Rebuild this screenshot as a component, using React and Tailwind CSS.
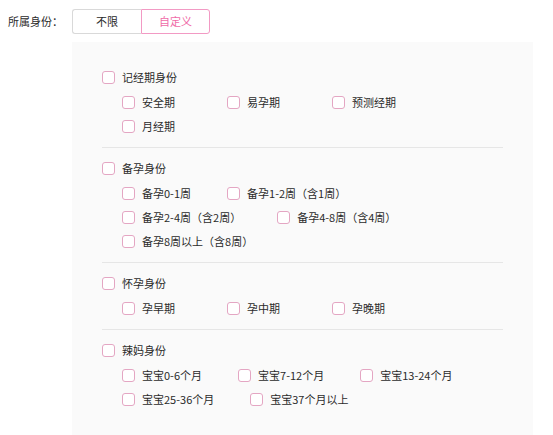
// App.jsx — 所属身份 selector with custom identity groups
import { useState } from 'react'

const groups = [
  {
    title: '记经期身份',
    rows: [['安全期', '易孕期', '预测经期'], ['月经期']],
  },
  {
    title: '备孕身份',
    rows: [['备孕0-1周', '备孕1-2周（含1周）'], ['备孕2-4周（含2周）', '备孕4-8周（含4周）'], ['备孕8周以上（含8周）']],
  },
  {
    title: '怀孕身份',
    rows: [['孕早期', '孕中期', '孕晚期']],
  },
  {
    title: '辣妈身份',
    rows: [['宝宝0-6个月', '宝宝7-12个月', '宝宝13-24个月'], ['宝宝25-36个月', '宝宝37个月以上']],
  },
]

function Check({ label, checked, onChange }) {
  return (
    <label className="flex items-center h-[24px] cursor-pointer">
      <span
        onClick={onChange}
        className={`w-[13px] h-[13px] rounded-[3px] border flex-shrink-0 ${
          checked ? 'bg-[#f06ba8] border-[#f06ba8]' : 'bg-white border-[#e4a6c3]'
        }`}
      />
      <span className="ml-[7px] whitespace-nowrap">{label}</span>
    </label>
  )
}

export default function App() {
  const [mode, setMode] = useState('custom')
  const [picked, setPicked] = useState({})
  const toggle = (k) => setPicked((p) => ({ ...p, [k]: !p[k] }))

  return (
    <div
      className="w-[553px] h-[435px] bg-white text-[11px] text-[#2b2b2b] overflow-hidden"
      style={{ fontFamily: '"Noto Sans CJK SC", "Noto Sans", sans-serif' }}
    >
      {/* Top row */}
      <div className="flex items-center pt-[9px] pl-[8px]">
        <div className="w-[64px]">所属身份：</div>
        <div className="flex h-[25px]">
          <button
            onClick={() => setMode('all')}
            className={`w-[69px] h-full rounded-l-[3px] border ${
              mode === 'all' ? 'border-[#f29ac4] text-[#f06ba8]' : 'border-[#d9d9d9] border-r-0 text-[#2b2b2b]'
            }`}
          >
            不限
          </button>
          <button
            onClick={() => setMode('custom')}
            className={`w-[69px] h-full rounded-r-[3px] border ${
              mode === 'custom' ? 'border-[#f29ac4] text-[#f06ba8]' : 'border-[#d9d9d9] border-l-0 text-[#2b2b2b]'
            }`}
          >
            自定义
          </button>
        </div>
      </div>

      {/* Custom panel */}
      <div className="ml-[72px] mt-[8px] w-[461px] h-[400px] bg-[#fafafa] pt-[23px] px-[30px]">
        {groups.map((g, gi) => (
          <div key={g.title} className={gi > 0 ? 'border-t border-[#e6e6e6] pt-[8px] mt-[9px]' : ''}>
            <Check label={g.title} checked={!!picked[g.title]} onChange={() => toggle(g.title)} />
            <div className="pl-[20px] mt-[1px]">
              {g.rows.map((row, ri) => (
                <div key={ri} className="flex">
                  {row.map((item) => (
                    <div key={item} className="min-w-[69px] mr-[36px]">
                      <Check label={item} checked={!!picked[item]} onChange={() => toggle(item)} />
                    </div>
                  ))}
                </div>
              ))}
            </div>
          </div>
        ))}
      </div>
    </div>
  )
}
